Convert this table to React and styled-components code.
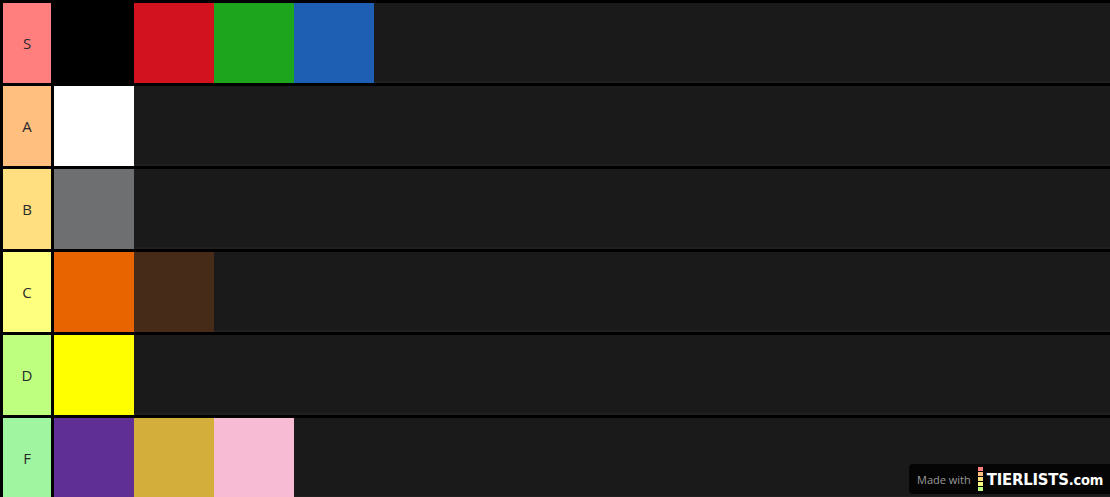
import React from "react";
import styled, { createGlobalStyle } from "styled-components";

const GlobalStyle = createGlobalStyle`
  html, body {
    margin: 0;
    padding: 0;
    background: #000;
    overflow: hidden;
  }
`;

const Board = styled.div`
  position: relative;
  width: 1110px;
  height: 497px;
  padding: 3px 0 0 3px;
  box-sizing: border-box;
  background: #000;
  display: flex;
  flex-direction: column;
  gap: 3px;
  overflow: hidden;
`;

const Row = styled.div`
  display: flex;
  gap: 3px;
  height: 80px;
  flex-shrink: 0;
`;

const Label = styled.div`
  width: 48px;
  flex-shrink: 0;
  background: ${(p) => p.$color};
  display: flex;
  align-items: center;
  justify-content: center;
  font-family: "Open Sans", "Liberation Sans", sans-serif;
  font-size: 15px;
  color: #2a2a2a;
`;

const Items = styled.div`
  flex: 1;
  display: flex;
  background: #1a1a1a;
  box-shadow: inset 0 -2px 0 #202020;
`;

const Item = styled.div`
  width: 80px;
  height: 80px;
  flex-shrink: 0;
  background: ${(p) => p.$color};
`;

const Badge = styled.div`
  position: absolute;
  right: 0;
  bottom: 3px;
  width: 201px;
  height: 30px;
  box-sizing: border-box;
  padding: 0 0 0 8px;
  background: #050505;
  border-radius: 4px 0 0 4px;
  display: flex;
  align-items: center;
  white-space: nowrap;
`;

const MadeWith = styled.span`
  font-family: "Open Sans", "Liberation Sans", sans-serif;
  font-size: 11px;
  color: #9a9a9a;
  margin-right: 7px;
`;

const Squares = styled.div`
  display: flex;
  flex-direction: column;
  gap: 1px;
  margin-right: 4px;
`;

const Square = styled.div`
  width: 5px;
  height: 4px;
  background: ${(p) => p.$color};
`;

const Brand = styled.span`
  font-family: "DejaVu Sans Condensed", "DejaVu Sans", sans-serif;
  font-stretch: condensed;
  font-weight: bold;
  font-size: 16.5px;
  color: #fff;
  letter-spacing: -0.2px;
`;

const Dot = styled.span`
  font-size: 14.5px;
`;

const tiers = [
  { name: "S", color: "#ff7f7f", items: ["#000000", "#d2121e", "#1ea51e", "#1e5fb4"] },
  { name: "A", color: "#ffbf7f", items: ["#ffffff"] },
  { name: "B", color: "#ffdf7f", items: ["#6e6f70"] },
  { name: "C", color: "#ffff7f", items: ["#e86400", "#452b18"] },
  { name: "D", color: "#bfff7f", items: ["#ffff00"] },
  { name: "F", color: "#9ff5a0", items: ["#5f2f96", "#d4ae3a", "#f7bcd4"] },
];

const badgeColors = ["#ff7f7f", "#ffbf7f", "#ffdf7f", "#ffff7f", "#bfff7f"];

const App = () => {
  return (
    <>
      <GlobalStyle />
      <Board>
        {tiers.map((tier) => (
          <Row key={tier.name}>
            <Label $color={tier.color}>{tier.name}</Label>
            <Items>
              {tier.items.map((c, i) => (
                <Item key={i} $color={c} />
              ))}
            </Items>
          </Row>
        ))}
        <Badge>
          <MadeWith>Made with</MadeWith>
          <Squares>
            {badgeColors.map((c) => (
              <Square key={c} $color={c} />
            ))}
          </Squares>
          <Brand>
            TIERLISTS<Dot>.com</Dot>
          </Brand>
        </Badge>
      </Board>
    </>
  );
};

export default App;
